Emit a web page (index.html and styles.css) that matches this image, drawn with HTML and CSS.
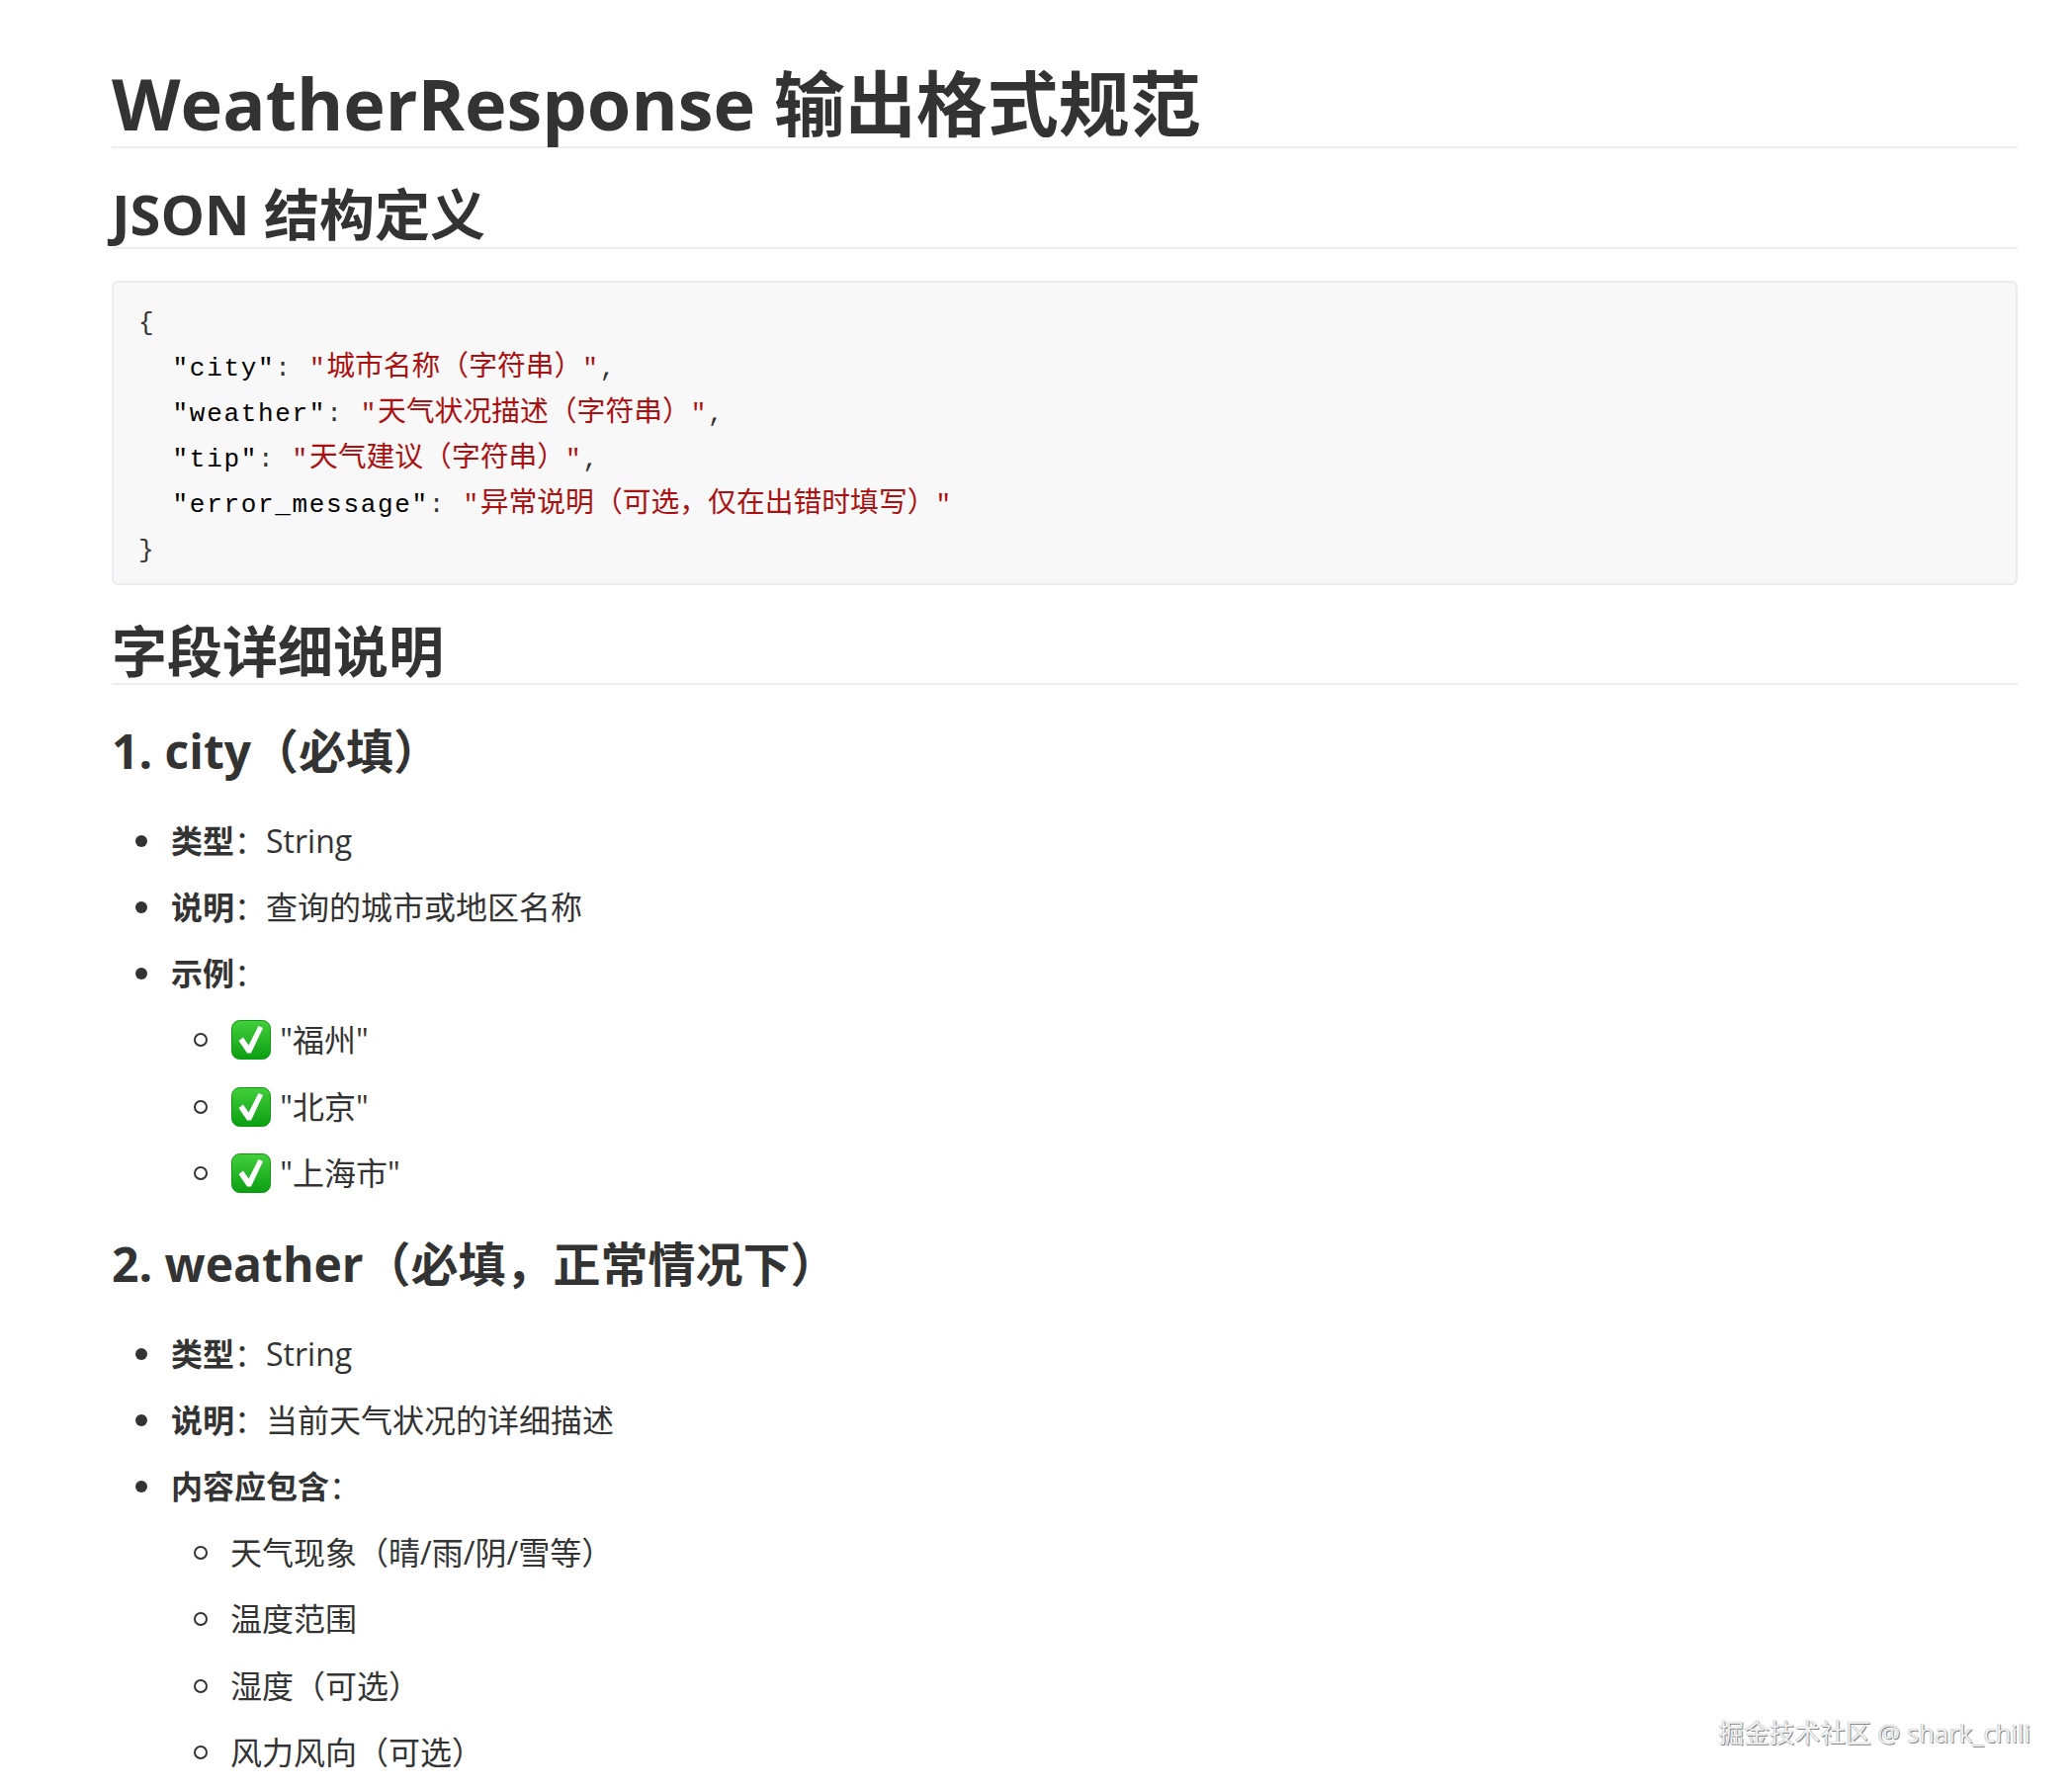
FILE: index.html
```html
<!DOCTYPE html>
<html lang="zh-CN">
<head>
<meta charset="utf-8">
<title>WeatherResponse 输出格式规范</title>
<link rel="stylesheet" href="styles.css">
</head>
<body>
<svg class="defs" width="0" height="0" aria-hidden="true">
  <defs>
    <linearGradient id="green" x1="0" y1="0" x2="0" y2="1">
      <stop offset="0" stop-color="#43cf3c"/>
      <stop offset="1" stop-color="#0c9f12"/>
    </linearGradient>
    <symbol id="check" viewBox="0 0 40 40">
      <rect x="0.5" y="0.5" width="39" height="39" rx="8" fill="url(#green)" stroke="#0c9a10" stroke-width="1"/>
      <path d="M7.5 21 L12 17.5 L17.5 25.5 L27.5 6 L32 8 L20 33.5 H16 Z" fill="#fff"/>
    </symbol>
  </defs>
</svg>
<main class="doc">
  <h1>WeatherResponse 输出格式规范</h1>
  <h2>JSON 结构定义</h2>
  <pre class="code"><span class="p">{</span>
  <span class="k">"city"</span><span class="p">:</span> <span class="s">"<span class="z">城市名称（字符串）</span>"</span><span class="p">,</span>
  <span class="k">"weather"</span><span class="p">:</span> <span class="s">"<span class="z">天气状况描述（字符串）</span>"</span><span class="p">,</span>
  <span class="k">"tip"</span><span class="p">:</span> <span class="s">"<span class="z">天气建议（字符串）</span>"</span><span class="p">,</span>
  <span class="k">"error_message"</span><span class="p">:</span> <span class="s">"<span class="z">异常说明（可选，仅在出错时填写）</span>"</span>
<span class="p">}</span></pre>
  <h2>字段详细说明</h2>
  <h3>1. city（必填）</h3>
  <ul class="list">
    <li class="item"><strong>类型</strong>：String</li>
    <li class="item"><strong>说明</strong>：查询的城市或地区名称</li>
    <li class="item"><strong>示例</strong>：
      <ul class="sublist">
        <li class="subitem"><svg class="emoji"><use href="#check"/></svg> "福州"</li>
        <li class="subitem"><svg class="emoji"><use href="#check"/></svg> "北京"</li>
        <li class="subitem"><svg class="emoji"><use href="#check"/></svg> "上海市"</li>
      </ul>
    </li>
  </ul>
  <h3>2. weather（必填，正常情况下）</h3>
  <ul class="list">
    <li class="item"><strong>类型</strong>：String</li>
    <li class="item"><strong>说明</strong>：当前天气状况的详细描述</li>
    <li class="item"><strong>内容应包含</strong>：
      <ul class="sublist">
        <li class="subitem">天气现象（晴/雨/阴/雪等）</li>
        <li class="subitem">温度范围</li>
        <li class="subitem">湿度（可选）</li>
        <li class="subitem">风力风向（可选）</li>
      </ul>
    </li>
  </ul>
</main>
<div class="watermark">掘金技术社区 @ shark_chili</div>
</body>
</html>
```
FILE: styles.css
```css
html, body {
  margin: 0;
  height: 1810px;
  overflow: hidden;
  background: #fff;
}
body {
  position: relative;
  color: #333;
  font-family: "Open Sans", "Noto Sans CJK SC", sans-serif;
  font-size: 32px;
  line-height: 51.2px;
}
.defs { display: block; }
.doc { padding: 60px 55px 0 113px; }
h1, h2, h3 { font-weight: 700; margin: 0; }
h1 {
  font-size: 72px;
  line-height: 87px;
  padding-top: 1px;
  border-bottom: 2px solid #eee;
}
h2 {
  font-size: 56px;
  line-height: 65.6px;
  padding-top: 2px;
  border-bottom: 2px solid #eee;
  margin-top: 32px;
}
h3 {
  font-size: 48px;
  line-height: 68.6px;
  margin-top: 33px;
}
.code {
  margin: 32px 0;
  padding: 18px 25px 10px;
  background: #f8f8f8;
  border: 2px solid #eaecef;
  border-radius: 6px;
  font-family: "Liberation Mono", "Noto Sans CJK SC", monospace;
  font-size: 26px;
  letter-spacing: 1.68px;
  line-height: 46px;
  color: #000;
}
.code .p { color: #333; }
.code .s { color: #a11; }
.code .z { font-size: 28.8px; letter-spacing: 0; }
.list {
  list-style: none;
  margin: 30px 0 33px;
  padding: 0 0 0 60px;
}
.sublist {
  list-style: none;
  margin: 0;
  padding: 0 0 0 60px;
}
.item, .subitem {
  position: relative;
  margin-top: 16px;
}
.item:first-child { margin-top: 0; }
.item::before {
  content: "";
  position: absolute;
  left: -36px;
  top: 20px;
  width: 12px;
  height: 12px;
  border-radius: 50%;
  background: #333;
}
.subitem::before {
  content: "";
  position: absolute;
  left: -37px;
  top: 19px;
  width: 14px;
  height: 14px;
  box-sizing: border-box;
  border: 2px solid #333;
  border-radius: 50%;
}
.emoji {
  width: 40px;
  height: 40px;
  margin: 0 1px;
  vertical-align: -8px;
}
.watermark {
  position: absolute;
  right: 42px;
  top: 1736px;
  font-size: 25.7px;
  line-height: 36px;
  white-space: nowrap;
  color: #f2f2f2;
  text-shadow: 1px 1px 0 #888, 0 0 1px #777;
}
```
